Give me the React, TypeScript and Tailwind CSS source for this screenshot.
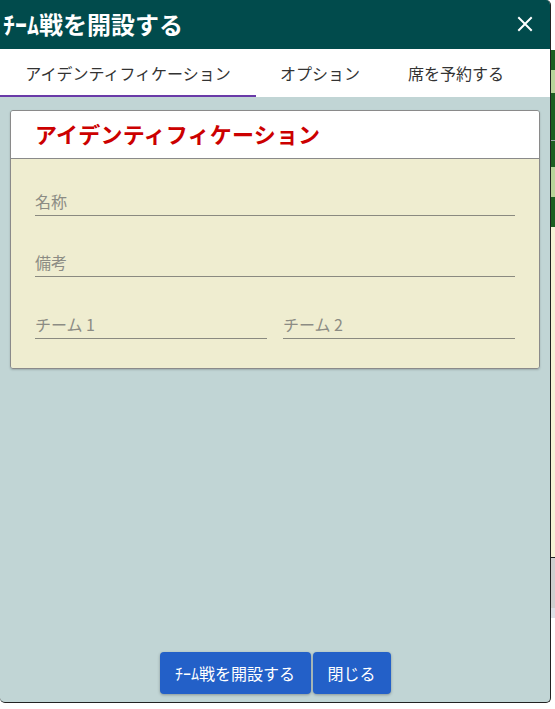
import React from "react";

const font = { fontFamily: '"Noto Sans CJK JP", "Noto Sans", sans-serif' };

function Field({ label }: { label: string }) {
  return (
    <div className="border-b border-[#8a8a80] pb-[2px]">
      <span className="block text-[16px] leading-[24px] text-[#8c8c84]">{label}</span>
    </div>
  );
}

export default function App() {
  return (
    <div className="w-[555px] h-[709px] bg-white flex overflow-hidden" style={font}>
      <div className="w-[551px] h-[703px] flex flex-col bg-[#c1d5d5] border-r border-b border-[#222] rounded-tr-[5px] rounded-b-[5px] overflow-hidden shrink-0">
        <div className="h-[49px] bg-[#014b4c] flex items-center justify-between pl-[3px] pr-[17px] shrink-0">
          <span className="text-white text-[24px] font-bold leading-[30px] pb-[2px]">ﾁｰﾑ戦を開設する</span>
          <svg width="16" height="16" viewBox="0 0 16 16" className="mb-[1px]">
            <path d="M2 2 L14 14 M14 2 L2 14" stroke="white" strokeWidth="2" strokeLinecap="square" />
          </svg>
        </div>
        <div className="h-[48px] bg-white flex shrink-0">
          <div className="w-[256px] flex items-center justify-center border-b-2 border-[#6a3aa8] text-[16px] text-[#333] pt-[2px]">アイデンティフィケーション</div>
          <div className="w-[128px] flex items-center justify-center border-b-2 border-transparent text-[16px] text-[#333] pt-[2px]">オプション</div>
          <div className="w-[144px] flex items-center justify-center border-b-2 border-transparent text-[16px] text-[#333] pt-[2px]">席を予約する</div>
        </div>
        <div className="flex-1 flex flex-col pt-[13px] px-[10px] pb-[8px]">
          <div className="border border-[#8a8a8a] rounded-[3px] overflow-hidden shadow-[0_1px_2px_rgba(0,0,0,0.2)]">
            <div className="h-[48px] bg-white border-b border-[#8a8a8a] flex items-center pl-[24px] pb-[3px]">
              <span className="text-[22px] font-bold leading-[28px] tracking-[0.2px] text-[#cc0000]">アイデンティフィケーション</span>
            </div>
            <div className="bg-[#efedd0] px-6 pt-[30px] pb-[29px]">
              <Field label="名称" />
              <div className="mt-[34px]">
                <Field label="備考" />
              </div>
              <div className="mt-[35px] grid grid-cols-2 gap-x-[16px]">
                <Field label="チーム 1" />
                <Field label="チーム 2" />
              </div>
            </div>
          </div>
          <div className="flex-1" />
          <div className="flex justify-center gap-[2px]">
            <button className="h-[42px] w-[151px] rounded-[4px] bg-[#2360c8] text-white text-[16px] leading-[20px] shadow-[0_1px_3px_rgba(0,0,0,0.3)]">ﾁｰﾑ戦を開設する</button>
            <button className="h-[42px] w-[78px] rounded-[4px] bg-[#2360c8] text-white text-[16px] leading-[20px] shadow-[0_1px_3px_rgba(0,0,0,0.3)]">閉じる</button>
          </div>
        </div>
      </div>
      <div className="w-[4px] flex flex-col shrink-0">
        <div className="h-[50px] bg-white" />
        <div className="h-[20px] bg-[#1d5e22]" />
        <div className="h-[23px] bg-[#b9d49a]" />
        <div className="h-[47px] bg-[#1d5e22]" />
        <div className="h-[1px] bg-[#9aa]" />
        <div className="h-[26px] bg-[#1d5e22]" />
        <div className="h-[30px] bg-[#b9d49a]" />
        <div className="h-[30px] bg-[#1d5e22]" />
        <div className="h-[330px] bg-[#f6f2d6]" />
        <div className="h-[1px] bg-[#222]" />
        <div className="h-[50px] bg-[#cfcfcf]" />
        <div className="h-[10px] bg-[#dde0e6]" />
        <div className="flex-1 bg-white" />
      </div>
    </div>
  );
}
